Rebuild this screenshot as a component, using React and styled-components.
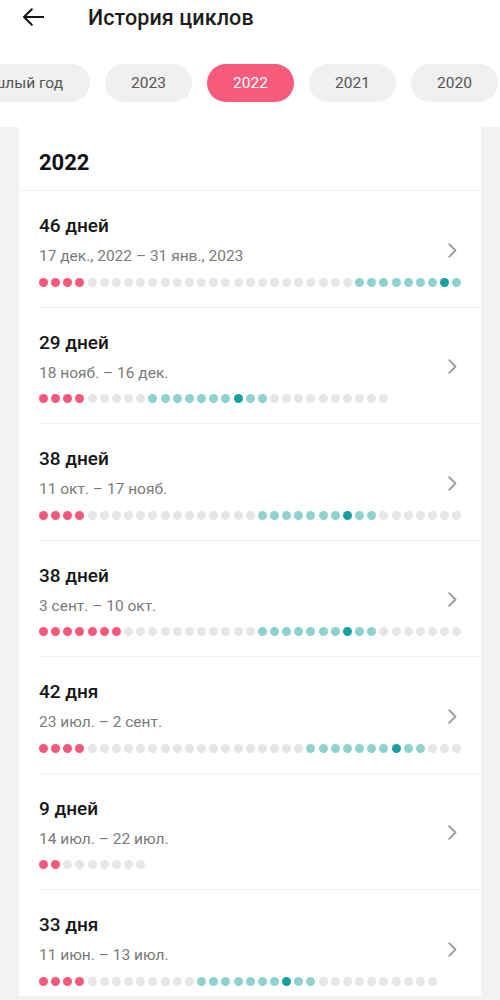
import React from 'react'
import styled, { createGlobalStyle } from 'styled-components'

const GlobalStyle = createGlobalStyle`
  body {
    margin: 0;
    background: #ffffff;
    font-family: Roboto, "Noto Sans", "Liberation Sans", sans-serif;
  }
`

const COLORS = {
  r: '#f4587a',
  g: '#e6e6e6',
  t: '#8ed2cf',
  d: '#16a09f',
}

const cycles = [
  { title: '46 дней', date: '17 дек., 2022 – 31 янв., 2023', segs: [['r', 4], ['g', 22], ['t', 7], ['d', 1], ['t', 1]] },
  { title: '29 дней', date: '18 нояб. – 16 дек.', segs: [['r', 4], ['g', 5], ['t', 7], ['d', 1], ['t', 2], ['g', 10]] },
  { title: '38 дней', date: '11 окт. – 17 нояб.', segs: [['r', 4], ['g', 14], ['t', 7], ['d', 1], ['t', 2], ['g', 7]] },
  { title: '38 дней', date: '3 сент. – 10 окт.', segs: [['r', 7], ['g', 11], ['t', 7], ['d', 1], ['t', 2], ['g', 7]] },
  { title: '42 дня', date: '23 июл. – 2 сент.', segs: [['r', 4], ['g', 18], ['t', 7], ['d', 1], ['t', 2], ['g', 3]] },
  { title: '9 дней', date: '14 июл. – 22 июл.', segs: [['r', 2], ['g', 7]] },
  { title: '33 дня', date: '11 июн. – 13 июл.', segs: [['r', 4], ['g', 9], ['t', 7], ['d', 1], ['t', 2], ['g', 10]] },
]

const years = ['2023', '2022', '2021', '2020']

const expand = (segs) => segs.flatMap(([kind, n]) => Array.from({ length: n }, () => kind))

const App = () => {
  return (
    <Page>
      <GlobalStyle />
      <Header>
        <BackButton aria-label='Назад'>
          <svg width='22' height='18' viewBox='0 0 22 18' fill='none'>
            <path d='M21.5 9H2 M9.8 1.2L2 9l7.8 7.8' stroke='#151515' strokeWidth='2' strokeLinecap='round' strokeLinejoin='round' />
          </svg>
        </BackButton>
        <Title>История циклов</Title>
      </Header>

      <ChipScroller>
        <ChipRow>
          <Chip $wide>Прошлый год</Chip>
          {years.map((y) => (
            <Chip key={y} $active={y === '2022'}>{y}</Chip>
          ))}
        </ChipRow>
      </ChipScroller>

      <Body>
        <Card>
          <CardHeader>2022</CardHeader>
          {cycles.map((c, i) => (
            <Item key={i} $last={i === cycles.length - 1}>
              <ItemMain>
                <ItemTitle>{c.title}</ItemTitle>
                <ItemDate>{c.date}</ItemDate>
                <Dots>
                  {expand(c.segs).map((k, j) => (
                    <Dot key={j} $kind={k} />
                  ))}
                </Dots>
              </ItemMain>
              <Chevron>
                <svg width='9' height='15' viewBox='0 0 9 15' fill='none'>
                  <path d='M1.2 1.2L7.5 7.5 1.2 13.8' stroke='#9b9b9b' strokeWidth='1.8' strokeLinecap='round' strokeLinejoin='round' />
                </svg>
              </Chevron>
            </Item>
          ))}
        </Card>
      </Body>
    </Page>
  )
}

const Page = styled.div`
  display: flex;
  flex-direction: column;
  min-height: 1000px;
`

const Header = styled.header`
  display: flex;
  align-items: center;
  height: 34px;
  padding-left: 22px;
  gap: 44px;
`

const BackButton = styled.button`
  display: flex;
  align-items: center;
  padding: 0;
  border: none;
  background: none;
  width: 22px;
  height: 18px;
`

const Title = styled.h1`
  margin: 0;
  font-size: 21.5px;
  font-weight: 500;
  color: #1c1c1c;
  letter-spacing: 0.1px;
`

const ChipScroller = styled.div`
  overflow: hidden;
  margin-top: 30px;
  margin-bottom: 25px;
`

const ChipRow = styled.div`
  display: flex;
  gap: 15px;
  margin-left: -60px;
`

const Chip = styled.div`
  flex: none;
  display: flex;
  align-items: center;
  justify-content: ${({ $wide }) => ($wide ? 'flex-end' : 'center')};
  width: ${({ $wide }) => ($wide ? '150px' : '87px')};
  padding-right: ${({ $wide }) => ($wide ? '27px' : '0')};
  box-sizing: border-box;
  height: 38px;
  border-radius: 19px;
  font-size: 15.5px;
  background: ${({ $active }) => ($active ? '#f65b7b' : '#f0f0f0')};
  color: ${({ $active }) => ($active ? '#ffffff' : '#555555')};
`

const Body = styled.main`
  flex: 1;
  background: #f2f2f2;
  padding: 0 19px 4px;
`

const Card = styled.section`
  background: #ffffff;
`

const CardHeader = styled.h2`
  margin: 0;
  padding: 23px 20px 14px;
  line-height: 26px;
  font-size: 22px;
  font-weight: 700;
  color: #111;
  border-bottom: 1px solid #efefef;
`

const Item = styled.div`
  display: grid;
  margin-left: 20px;
  padding: 23px 18px ${({ $last }) => ($last ? '10px' : '20px')} 0;
  border-bottom: ${({ $last }) => ($last ? 'none' : '1px solid #efefef')};
`

const ItemMain = styled.div`
  grid-area: 1 / 1;
  display: flex;
  flex-direction: column;
`

const ItemTitle = styled.div`
  font-size: 19px;
  line-height: 24px;
  font-weight: 500;
  color: #161616;
`

const ItemDate = styled.div`
  margin-top: 8px;
  font-size: 15.5px;
  line-height: 20px;
  color: #7a7a7a;
`

const Dots = styled.div`
  display: flex;
  gap: 3.17px;
  margin-top: 11.5px;
`

const Dot = styled.span`
  flex: none;
  width: 9px;
  height: 9px;
  border-radius: 50%;
  background: ${({ $kind }) => COLORS[$kind]};
`

const Chevron = styled.div`
  grid-area: 1 / 1;
  justify-self: end;
  align-self: center;
  display: flex;
  margin-right: 6px;
`

export default App
